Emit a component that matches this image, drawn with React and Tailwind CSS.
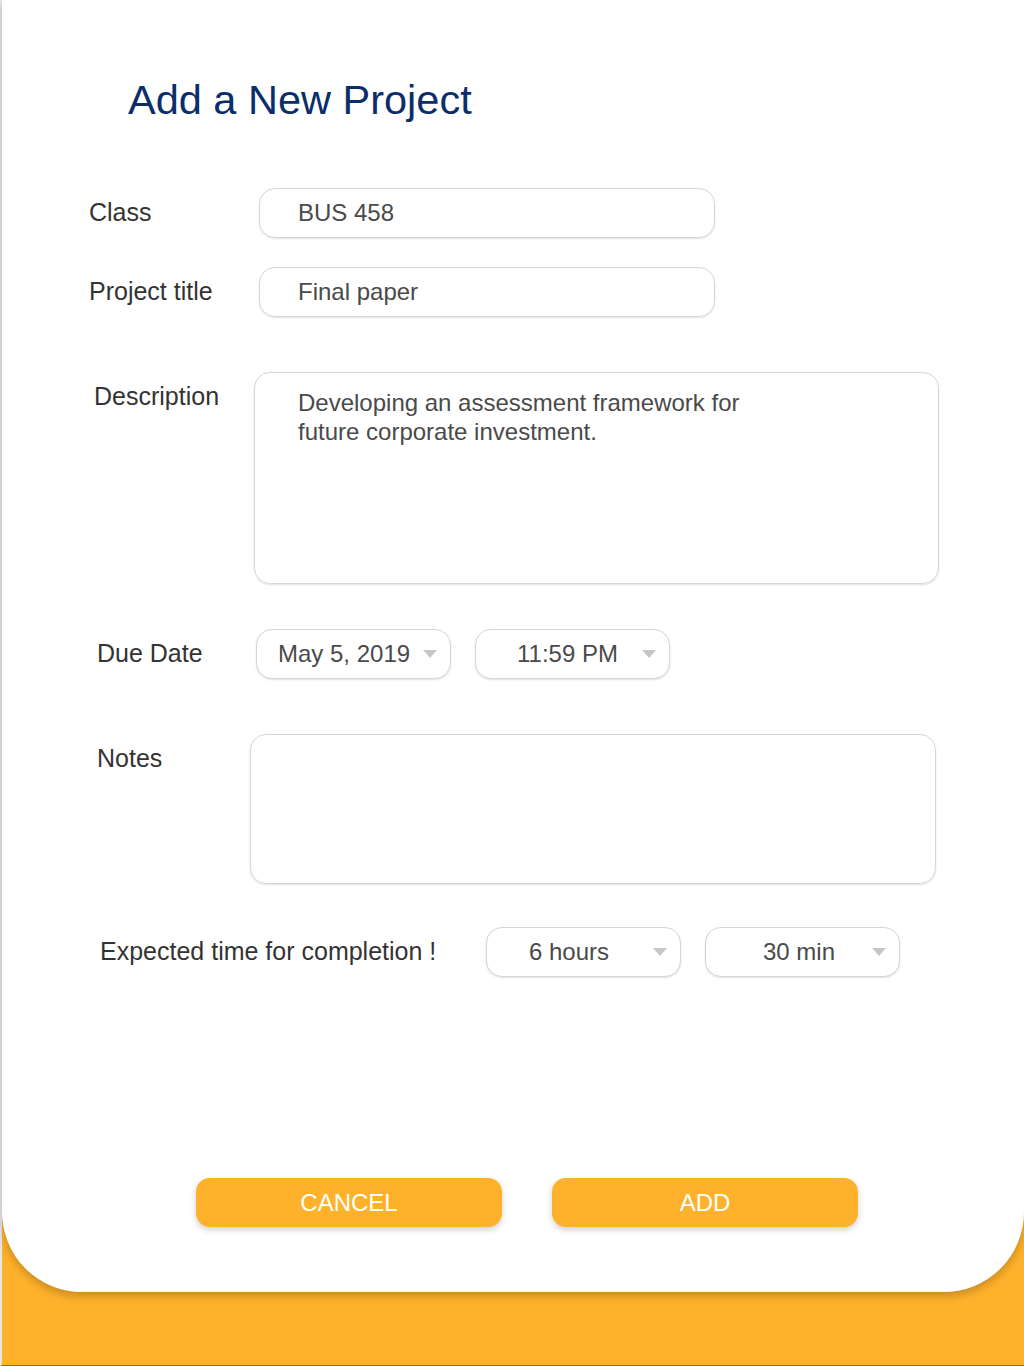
import React from "react";

const font = { fontFamily: '"Liberation Sans", Arial, sans-serif' };

function Arrow() {
    return (
        <svg width="14" height="8" viewBox="0 0 14 8" className="shrink-0">
            <path d="M0 0 L14 0 L7 8 Z" fill="#c6c6c6" />
        </svg>
    );
}

// Select-looking pill with caret on the right
function Dropdown({ value, textClass }) {
    return (
        <div className="w-[195px] h-[50px] rounded-[16px] border border-[#d6d6d6] bg-white shadow-[0_1px_2px_rgba(0,0,0,0.12)] flex items-center pr-[13px]">
            <span className={`flex-1 text-[24px] text-[#4a4a4a] ${textClass}`}>{value}</span>
            <Arrow />
        </div>
    );
}

export default function App() {
    return (
        <div
            className="min-h-[1366px] w-[1024px] bg-[#FEB12A] border-l-2 border-[#e6e6e6] border-b border-b-[#6e6e6e] flex flex-col"
            style={font}
        >
            <div className="h-[1292px] bg-white rounded-b-[80px] shadow-[0_4px_8px_rgba(0,0,0,0.22)] flex flex-col">
                {/* Title */}
                <h1 className="pt-[76px] pl-[126px] text-[41.5px] leading-[48px] text-[#0b2e6b] font-normal">
                    Add a New Project
                </h1>

                {/* Class */}
                <div className="flex items-center mt-[64px] ml-[87px]">
                    <div className="w-[170px] text-[25px] text-[#333]">Class</div>
                    <div className="w-[456px] h-[50px] rounded-[16px] border border-[#d6d6d6] shadow-[0_1px_2px_rgba(0,0,0,0.12)] flex items-center pl-[38px] text-[24px] text-[#4a4a4a]">
                        BUS 458
                    </div>
                </div>

                {/* Project title */}
                <div className="flex items-center mt-[29px] ml-[87px]">
                    <div className="w-[170px] text-[25px] text-[#333]">Project title</div>
                    <div className="w-[456px] h-[50px] rounded-[16px] border border-[#d6d6d6] shadow-[0_1px_2px_rgba(0,0,0,0.12)] flex items-center pl-[38px] text-[24px] text-[#4a4a4a]">
                        Final paper
                    </div>
                </div>

                {/* Description */}
                <div className="flex items-start mt-[55px] ml-[92px]">
                    <div className="w-[160px] pt-[10px] text-[25px] leading-[29px] text-[#333]">Description</div>
                    <div className="w-[685px] h-[212px] rounded-[16px] border border-[#d6d6d6] shadow-[0_1px_2px_rgba(0,0,0,0.12)] pt-[15px] pl-[43px] text-[24px] leading-[29px] text-[#4a4a4a]">
                        Developing an assessment framework for
                        <br />
                        future corporate investment.
                    </div>
                </div>

                {/* Due Date */}
                <div className="flex items-center mt-[45px] ml-[95px]">
                    <div className="w-[159px] text-[25px] text-[#333]">Due Date</div>
                    <div className="flex gap-[24px]">
                        <Dropdown value="May 5, 2019" textClass="pl-[21px]" />
                        <Dropdown value="11:59 PM" textClass="pl-[41px]" />
                    </div>
                </div>

                {/* Notes */}
                <div className="flex items-start mt-[55px] ml-[95px]">
                    <div className="w-[153px] pt-[10px] text-[25px] leading-[29px] text-[#333]">Notes</div>
                    <div className="w-[686px] h-[150px] rounded-[16px] border border-[#d6d6d6] shadow-[0_1px_2px_rgba(0,0,0,0.12)]" />
                </div>

                {/* Expected time */}
                <div className="flex items-center mt-[43px] ml-[98px]">
                    <div className="w-[386px] text-[25px] text-[#333]">Expected time for completion !</div>
                    <div className="flex gap-[24px]">
                        <Dropdown value="6 hours" textClass="pl-[42px]" />
                        <Dropdown value="30 min" textClass="pl-[57px]" />
                    </div>
                </div>

                {/* Actions */}
                <div className="mt-auto pb-[65px] flex gap-[50px] pl-[194px]">
                    <button className="w-[306px] h-[49px] rounded-[14px] bg-[#FEB12A] text-white text-[24px] shadow-[0_3px_6px_rgba(0,0,0,0.18)]">
                        CANCEL
                    </button>
                    <button className="w-[306px] h-[49px] rounded-[14px] bg-[#FEB12A] text-white text-[24px] shadow-[0_3px_6px_rgba(0,0,0,0.18)]">
                        ADD
                    </button>
                </div>
            </div>
        </div>
    );
}
